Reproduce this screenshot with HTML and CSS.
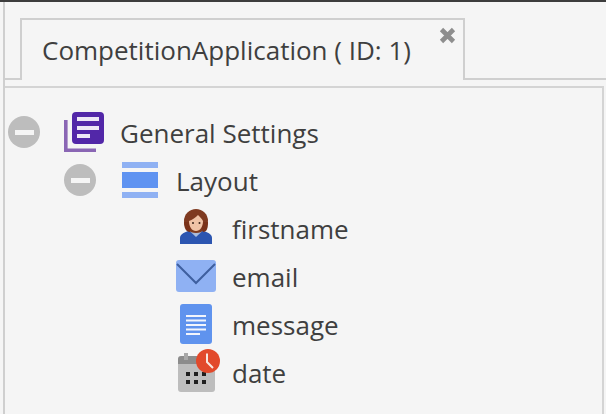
FILE: index.html
```html
<!DOCTYPE html>
<html lang="en">
<head>
<meta charset="utf-8">
<title>CompetitionApplication</title>
<link rel="stylesheet" href="styles.css">
</head>
<body>
<div class="topbar"></div>
<div class="frame">
  <div class="tabstrip">
    <div class="tab">
      <span class="tab-title">CompetitionApplication ( ID: 1)</span>
      <svg class="tab-close" width="17" height="17" viewBox="0 0 17 17"><path d="M2.500 2.500L14.500 14.500M14.500 2.500L2.500 14.500" stroke="#8e8e8e" stroke-width="4.6" fill="none"/></svg>
    </div>
  </div>
  <div class="panel">
    <div class="row level-0">
      <span class="toggle"><span class="toggle-bar"></span></span>
      <svg class="icon" width="40" height="40" viewBox="0 0 40 40">
        <path d="M1.800 8V38.200H32" fill="none" stroke="#8a66b4" stroke-width="3.600"/>
        <rect x="8" y="0" width="32" height="32" rx="4" fill="#5227a8"/>
        <rect x="13" y="5" width="22" height="4" fill="#eee8f6"/>
        <rect x="13" y="14" width="22" height="4" fill="#eee8f6"/>
        <rect x="13" y="22" width="13" height="4" fill="#eee8f6"/>
      </svg>
      <span class="label">General Settings</span>
    </div>
    <div class="row level-1">
      <span class="toggle"><span class="toggle-bar"></span></span>
      <svg class="icon" width="40" height="40" viewBox="0 0 40 40">
        <rect x="2" y="2" width="36" height="6" fill="#8fb1f3"/>
        <rect x="2" y="12" width="36" height="16" fill="#5f93f1"/>
        <rect x="2" y="32" width="36" height="6" fill="#8fb1f3"/>
      </svg>
      <span class="label">Layout</span>
    </div>
    <div class="row level-2">
      <span class="toggle toggle-empty"></span>
      <svg class="icon" width="40" height="40" viewBox="0 0 40 40">
        <path d="M4 36V30C4 26 9 24 14 22.500H26C31 24 36 26 36 30V36Z" fill="#2c55b0"/>
        <path d="M13 22.500L20 29L27 22.500L24 18H16Z" fill="#a9bbdc"/>
        <circle cx="20" cy="13" r="12" fill="#7f3a20"/>
        <path d="M8 14C8 20 10 24 14 24L16 14Z" fill="#7a3219"/>
        <path d="M32 14C32 20 31 24 27 24L24 14Z" fill="#7a3219"/>
        <path d="M13 13C16 12 20 9 22 7C24 9 26 11 27 13C27 19 24 23 20 23C16 23 13 19 13 13Z" fill="#f0c3a6"/>
        <circle cx="17" cy="15" r="1" fill="#3a2318"/>
        <circle cx="23.500" cy="15" r="1" fill="#3a2318"/>
      </svg>
      <span class="label">firstname</span>
    </div>
    <div class="row level-2">
      <span class="toggle toggle-empty"></span>
      <svg class="icon" width="40" height="40" viewBox="0 0 40 40">
        <rect x="0" y="4" width="40" height="32" rx="3" fill="#8fb1f3"/>
        <path d="M1 8L20 27L39 8" fill="none" stroke="#3e5f9f" stroke-width="2"/>
      </svg>
      <span class="label">email</span>
    </div>
    <div class="row level-2">
      <span class="toggle toggle-empty"></span>
      <svg class="icon" width="40" height="40" viewBox="0 0 40 40">
        <rect x="4" y="0" width="32" height="40" rx="3" fill="#5f93ee"/>
        <path d="M10 12H30M10 16.500H30M10 21H30M10 25.500H30M10 30H24" stroke="#f2f5fc" stroke-width="2" fill="none"/>
      </svg>
      <span class="label">message</span>
    </div>
    <div class="row level-2">
      <span class="toggle toggle-empty"></span>
      <svg class="icon icon-date" width="44" height="40" viewBox="0 0 44 40">
        <path d="M2 7a3 3 0 0 1 3-3H36a3 3 0 0 1 3 3V12H2Z" fill="#8c8c8c"/>
        <path d="M2 12H39V37a3 3 0 0 1-3 3H5a3 3 0 0 1-3-3Z" fill="#bdbdbd"/>
        <rect x="8" y="1" width="4" height="7" fill="#a8a8a8"/>
        <path d="M10 20h4v4h-4zM18 20h4v4h-4zM26 20h4v4h-4zM10 28h4v4h-4zM18 28h4v4h-4zM26 28h4v4h-4z" fill="#1e1e1e"/>
        <circle cx="32" cy="9" r="12" fill="#e2492b"/>
        <path d="M31 1.500V10L37 16" fill="none" stroke="#f7e7e0" stroke-width="2"/>
      </svg>
      <span class="label">date</span>
    </div>
  </div>
</div>
</body>
</html>
```
FILE: styles.css
```css
html, body {
  margin: 0;
  padding: 0;
}
body {
  width: 606px;
  height: 414px;
  overflow: hidden;
  background: #f5f5f5;
  font-family: "Open Sans", sans-serif;
  color: #3f3f3f;
}
.topbar {
  height: 2px;
  background: #3d3d3d;
}
.frame {
  margin-left: 3px;
  border-left: 2px solid #cfcfcf;
}
.tabstrip {
  display: flex;
  height: 78px;
  padding: 16px 0 0 15px;
  box-sizing: border-box;
  border-bottom: 2px solid #cfcfcf;
}
.tab {
  position: relative;
  display: flex;
  align-items: center;
  flex: none;
  width: 445px;
  height: 62px;
  box-sizing: border-box;
  padding: 0 0 0 20px;
  background: #f5f5f5;
  border: 2px solid #cfcfcf;
  border-bottom: 0;
}
.tab-title {
  font-size: 26px;
  line-height: 36px;
  white-space: nowrap;
}
.tab-close {
  position: absolute;
  top: 7px;
  right: 7px;
}
.panel {
  margin-top: 6px;
  width: 599px;
  height: 340px;
  box-sizing: border-box;
  padding-top: 20px;
  border-top: 2px solid #d4d4d4;
  border-right: 2px solid #d4d4d4;
}
.row {
  display: flex;
  align-items: center;
  height: 48px;
}
.level-0 { padding-left: 3px; }
.level-1 { padding-left: 59px; }
.level-2 { padding-left: 115px; }
.toggle {
  display: flex;
  align-items: center;
  justify-content: center;
  flex: none;
  width: 32px;
  height: 32px;
  margin-right: 24px;
  border-radius: 50%;
  background: #bdbdbd;
}
.toggle-empty {
  background: none;
}
.toggle-bar {
  width: 19px;
  height: 5px;
  background: #f5f5f5;
}
.icon {
  flex: none;
  margin-right: 16px;
}
.icon-date {
  margin-right: 12px;
  overflow: visible;
}
.label {
  padding-top: 2px;
  font-size: 26px;
  line-height: 36px;
  white-space: nowrap;
}
```
